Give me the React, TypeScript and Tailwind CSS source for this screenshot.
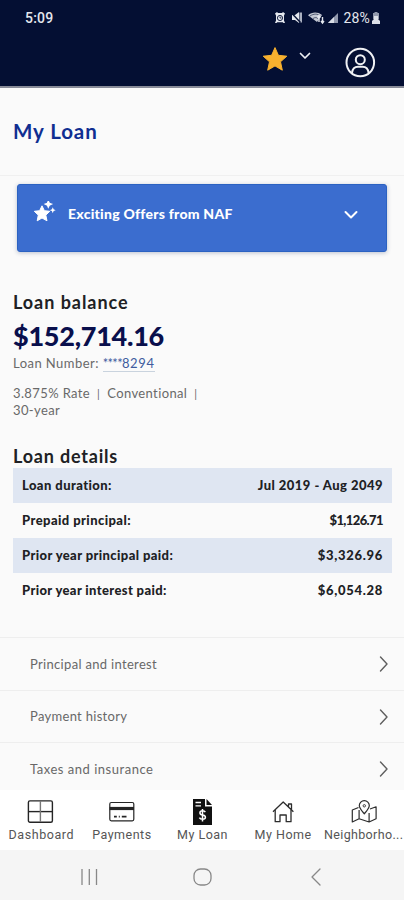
import React from "react";

const details = [
  { label: "Loan duration:", value: "Jul 2019 - Aug 2049", ls: "tracking-[0.43px]", vs: "tracking-[0.46px]" },
  { label: "Prepaid principal:", value: "$1,126.71", ls: "tracking-[0.43px]", vs: "tracking-[-0.6px]" },
  { label: "Prior year principal paid:", value: "$3,326.96", ls: "tracking-[0.4px]", vs: "tracking-[0.7px]" },
  { label: "Prior year interest paid:", value: "$6,054.28", ls: "tracking-[0.37px]", vs: "tracking-[0.7px]" },
];

const links = [
  { label: "Principal and interest", t: "tracking-[0.32px]" },
  { label: "Payment history", t: "tracking-[0.3px]" },
  { label: "Taxes and insurance", t: "tracking-[0.52px]" },
];

function StatusIcons() {
  return (
    <svg width="66" height="14" viewBox="0 0 66 14" fill="none">
      <path d="M1 2.500 3 1l1 1h4l1-1 2 1.500-1 2v5l1 2.500H9.500l-.8-.8H3.300l-.8.8H1l1-2.500v-5z" fill="#e4e7ee" />
      <circle cx="6" cy="7" r="2.600" stroke="#040f33" strokeWidth=".9" />
      <path d="M6 5.500V7h1.500" stroke="#040f33" strokeWidth=".8" />
      <path d="M18 4h3l4-3v11l-4-3h-3z" fill="#e4e7ee" />
      <path d="M25.500 1.500h2.500v10h-2.500z" fill="#aab0c0" />
      <path d="m17 1.500 9.500 10" stroke="#040f33" strokeWidth="1.400" />
      <path d="M34 4.200c4-3.500 10-3.500 14-.2L43 11z" fill="#c4c9d5" />
      <path d="M36 5c4-2.500 7-2.500 10.500 0M39 7.500c2-1.200 3.500-1.200 5 0" stroke="#040f33" strokeWidth=".6" />
      <path d="M45 11V5m-1.500 1.500L45 4.500l1.500 2M48.500 6v6M47 10l1.500 2 1.500-2" stroke="#e4e7ee" strokeWidth="1.400" />
      <path d="M54 12 64 2v10z" fill="#9299ad" />
      <path d="M54 12 60 6v6z" fill="#d9dde6" />
    </svg>
  );
}

function BatteryIcon() {
  return (
    <svg width="8" height="12" viewBox="0 0 8 12">
      <path d="M2.500 0h3v1H7v6H1V1h1.500z" fill="#9299ad" />
      <path d="M2 4h4v3l2 2v3H0V9l2-2z" fill="#dde0e8" />
    </svg>
  );
}

function Chevron({ className, w, h, d, sw }: { className: string; w: number; h: number; d: string; sw: number }) {
  return (
    <svg width={w} height={h} viewBox={`0 0 ${w} ${h}`} fill="none" stroke="currentColor" strokeWidth={sw} strokeLinecap="round" strokeLinejoin="round" className={className}>
      <path d={d} />
    </svg>
  );
}

function UserIcon() {
  return (
    <svg width="32" height="32" viewBox="0 0 32 32" fill="none" stroke="#f0f1f4" strokeWidth="2">
      <circle cx="16.300" cy="16.500" r="13.800" />
      <circle cx="16.300" cy="13.700" r="4.500" />
      <path d="M8 27c.5-4.200 3-6.200 6-6.200h4.600c3 0 5.500 2 6 6.200" />
    </svg>
  );
}

const star = "M12 0.600 15.400 8.300 23.800 9.200 17.500 14.800 19.300 23.200 12 18.900 4.700 23.200 6.500 14.800 0.200 9.200 8.600 8.300Z";

function OfferIcon() {
  return (
    <svg width="22" height="22" viewBox="0 0 22 22" fill="white">
      <path d="m8 4.800 2.400 4.900 5.400.6-4 3.800 1.200 5.700-5-2.800-4.800 2.800 1.100-5.700L.3 10.300l5.300-.6z" stroke="white" strokeWidth="1" strokeLinejoin="round" />
      <path d="m14.300 0.300 1 2 2 .8-2 .9-1 2-.9-2-2-.9 2-.8z" stroke="white" strokeWidth="1.400" />
      <path d="m18.800 6.300.8 2 2.100.9-2.100.9-.8 2.100-.9-2.100-2.100-.9 2.100-.9z" />
    </svg>
  );
}

function DashboardIcon() {
  return (
    <svg width="28" height="26" viewBox="0 0 28 26" fill="none" stroke="#252525" strokeWidth="1.400">
      <rect x="1.400" y="1.900" width="24" height="21.300" rx="1.500" />
      <path d="M1.200 12.600h24.400" />
      <path d="M13.400 2v21" stroke="#777" />
    </svg>
  );
}

function CardIcon() {
  return (
    <svg width="28" height="26" viewBox="0 0 28 26" fill="none" stroke="#252525">
      <rect x="1.800" y="3.500" width="24" height="18.300" rx="1.500" strokeWidth="1.200" />
      <path d="M1.600 9.500H26" strokeWidth="3.200" />
      <path d="M6 17.700h2.800m2 0h1m2 0h4.700" strokeWidth="1.800" />
    </svg>
  );
}

function LoanIcon() {
  return (
    <svg width="28" height="28" viewBox="0 0 28 28">
      <path d="M5 0h12v7.500h7V26H5z" fill="#111" />
      <path d="M18.500 0 24 6h-5.500z" fill="#111" />
      <path d="M7.500 3.500H13M7.500 6.800H13" stroke="#fff" strokeWidth="1.300" />
      <path d="M17.300 13.200c-.5-1-1.400-1.400-2.700-1.400-3.500 0-3.500 3.700-.2 4.100 4.200.5 3.800 4.400.2 4.400-1.600 0-2.700-.6-3.200-1.700M14.500 10v12.500" fill="none" stroke="#fff" strokeWidth="1.500" />
    </svg>
  );
}

function HomeIcon() {
  return (
    <svg width="28" height="26" viewBox="0 0 28 26" fill="none" stroke="#2d2d2d" strokeWidth="1.300" strokeLinejoin="round">
      <path d="m4 12.700 10.200-9.700 10.200 9.700M19.500 7.800V5h3v5.500" />
      <path d="M6.200 11v11.700h4.800v-6.700h6.200v6.700H22V11" />
    </svg>
  );
}

function MapIcon() {
  return (
    <svg width="28" height="26" viewBox="0 0 28 26" fill="none" stroke="#2d2d2d" strokeWidth="1.200" strokeLinejoin="round">
      <path d="M8.500 8.500 2.300 11v12l6.800-3.200 10 3.200 7-3.200V7.800L20 10M9.100 11v9M19.100 14v9" />
      <path d="M14.300 14.800c-3-3.500-5-5.500-5-8.200a5 5 0 0 1 10 0c0 2.700-2 4.700-5 8.200z" />
      <circle cx="14.300" cy="6.800" r="1.200" strokeWidth=".9" />
    </svg>
  );
}

const tabs = [
  { label: "Dashboard", icon: <DashboardIcon />, t: "tracking-[0.55px]" },
  { label: "Payments", icon: <CardIcon />, t: "tracking-[0.5px]" },
  { label: "My Loan", icon: <LoanIcon />, t: "tracking-[0.5px]" },
  { label: "My Home", icon: <HomeIcon />, t: "tracking-[0.5px]" },
  { label: "Neighborho...", icon: <MapIcon />, t: "tracking-[0.35px]" },
];

export default function App() {
  return (
    <div className="flex h-[900px] w-[404px] flex-col overflow-hidden bg-[#fafafa] font-['Lato',sans-serif] text-[#202124]">
      <header className="h-[88px] shrink-0 border-b-2 border-[#888b98] bg-[#040f33]">
        <div className="flex h-9 items-center pl-[25px] pr-[24px] font-['Roboto',sans-serif] text-[14px] text-[#e4e7ee]">
          <span className="font-medium tracking-[0.2px]">5:09</span>
          <div className="ml-auto flex items-center">
            <StatusIcons />
            <span className="ml-[3px] mr-[2px] tracking-[0.2px]">28%</span>
            <BatteryIcon />
          </div>
        </div>
        <div className="flex h-[50px] items-start pl-[263px]">
          <svg width="24" height="24" viewBox="0 0 24 24" fill="#f8b12f" stroke="#f8b12f" strokeLinejoin="round" className="mt-[11px]">
            <path d={star} />
          </svg>
          <Chevron w={12} h={8} d="m1.500 1.500 4.500 4.500 4.500-4.500" sw={1.700} className="ml-[12px] mt-[16px] text-[#eef0f4]" />
          <div className="ml-[33px] mt-[10px]"><UserIcon /></div>
        </div>
      </header>

      <div className="h-[88px] shrink-0 border-b border-[#f0f0f0] pl-[13px] pt-[31px]">
        <h1 className="text-[20.500px] font-bold leading-6 tracking-[0.9px] text-[#102e91]">My Loan</h1>
      </div>

      <section className="mx-[17px] mt-2 flex h-[68px] shrink-0 items-start rounded-[3px] border border-[#2b62c2] bg-[#3b6dcf] pl-4 text-white shadow-[0_1px_4px_rgba(40,60,110,0.3)]">
        <div className="mt-4"><OfferIcon /></div>
        <span className="ml-3 mt-[19px] text-[14px] font-black leading-5 tracking-[0.25px]">Exciting Offers from NAF</span>
        <Chevron w={14} h={10} d="m1.500 2 5.500 5.500L12.500 2" sw={2} className="ml-auto mr-[28px] mt-[25px]" />
      </section>

      <section className="mt-[38px] h-[154px] shrink-0 pl-[13px]">
        <h2 className="text-[18px] font-bold leading-6 tracking-[0.95px]">Loan balance</h2>
        <div className="mt-[4px] text-[27px] font-black leading-9 tracking-[-0.25px] text-[#090f4c]">$152,714.16</div>
        <div className="text-[13px] leading-[19px] tracking-[0.45px] text-[#696969]">
          Loan Number: <span className="inline-block border-b border-[#c9d3de] leading-[15px] text-[#405c9e]"><span className="tracking-[-0.700px]">****</span><span className="tracking-[0.6px]">8294</span></span>
        </div>
        <div className="mt-[12px] text-[13px] leading-[17px] tracking-[0.38px] text-[#696969]">
          <div className="flex"><span>3.875% Rate</span><span className="mx-[7px] text-[11px]">|</span><span>Conventional</span><span className="ml-[7px] text-[11px]">|</span></div>
          <div>30-year</div>
        </div>
      </section>

      <section className="h-[193px] shrink-0 px-[13px]">
        <h2 className="h-[24px] text-[18px] font-bold leading-6 tracking-[0.8px]">Loan details</h2>
        <div className="-mr-[1px]">
          {details.map((d, i) => (
            <div key={d.label} className={`flex h-[35px] items-center justify-between pl-[9px] pr-[9px] text-[13px] font-black ${i % 2 ? "" : "bg-[#dfe6f2]"}`}>
              <span className={d.ls}>{d.label}</span>
              <span className={d.vs}>{d.value}</span>
            </div>
          ))}
        </div>
      </section>

      <section className="flex h-[153px] shrink-0 flex-col overflow-hidden">
        {links.map((l) => (
          <div key={l.label} className="flex h-[52.500px] shrink-0 items-center justify-between border-t border-[#eeeeee] pl-[30px] pr-[15px] pt-px text-[13px] text-[#686868]">
            <span className={l.t}>{l.label}</span>
            <Chevron w={10} h={18} d="m1.500 2 6.500 7-6.500 7" sw={1.400} className="text-[#5e5e5e]" />
          </div>
        ))}
      </section>

      <nav className="grid h-[60px] shrink-0 grid-cols-5 bg-white pl-px font-['Roboto',sans-serif]">
        {tabs.map((t) => (
          <div key={t.label} className="flex min-w-0 flex-col items-center pt-[9px]">
            <div className="h-[26px]">{t.icon}</div>
            <span className={`mt-px whitespace-nowrap text-[12.500px] leading-[18px] text-[#555] ${t.t}`}>{t.label}</span>
          </div>
        ))}
      </nav>

      <footer className="flex h-[50px] shrink-0 items-center bg-[#f5f5f5] pl-[80px] pt-[3px] text-[#888]">
        <svg width="20" height="18" viewBox="0 0 20 18" stroke="currentColor" strokeWidth="1.300"><path d="M2 1v16M9.300 1v16M16.500 1v16" /></svg>
        <svg width="20" height="20" viewBox="0 0 20 20" fill="none" stroke="currentColor" strokeWidth="1.300" className="ml-[92px]"><rect x="2" y="2" width="17" height="16" rx="6.500" /></svg>
        <Chevron w={12} h={20} d="m10 2-8 8 8 8" sw={1.300} className="ml-[98px]" />
      </footer>
    </div>
  );
}
